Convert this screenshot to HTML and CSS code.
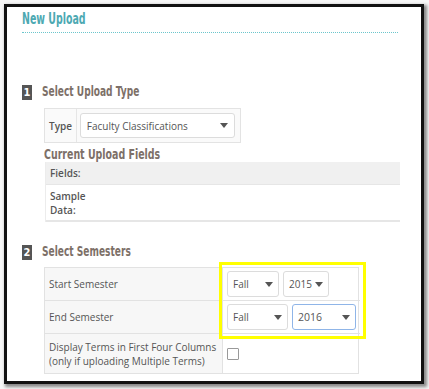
FILE: index.html
```html
<!DOCTYPE html>
<html>
<head>
<meta charset="utf-8">
<link rel="stylesheet" href="styles.css">
</head>
<body>
<div class="frame">
  <h1 class="title"><span class="narrow">New Upload</span></h1>
  <div class="rule"></div>

  <div class="step step-1">
    <span class="badge">1</span>
    <span class="step-title narrow">Select Upload Type</span>
  </div>

  <div class="type-box">
    <div class="type-label">Type</div>
    <div class="select select-type">
      <span>Faculty Classifications</span>
      <svg class="caret" width="8" height="5" viewBox="0 0 8 5"><path d="M0 0H8L4 5Z" fill="#555"/></svg>
    </div>
  </div>

  <h2 class="sub-title"><span class="narrow">Current Upload Fields</span></h2>
  <div class="fields-table">
    <div class="fields-row">Fields:</div>
    <div class="sample-row">Sample<br>Data:</div>
  </div>

  <div class="step step-2">
    <span class="badge">2</span>
    <span class="step-title narrow">Select Semesters</span>
  </div>

  <div class="sem-table">
    <div class="sem-label row-a">Start Semester</div>
    <div class="sem-ctrl row-a">
      <div class="select s-fall1"><span>Fall</span><svg class="caret" width="8" height="5" viewBox="0 0 8 5"><path d="M0 0H8L4 5Z" fill="#555"/></svg></div>
      <div class="select s-2015"><span>2015</span><svg class="caret" width="8" height="5" viewBox="0 0 8 5"><path d="M0 0H8L4 5Z" fill="#555"/></svg></div>
    </div>
    <div class="sem-label row-b">End Semester</div>
    <div class="sem-ctrl row-b">
      <div class="select s-fall2"><span>Fall</span><svg class="caret" width="8" height="5" viewBox="0 0 8 5"><path d="M0 0H8L4 5Z" fill="#555"/></svg></div>
      <div class="select s-2016 focused"><span>2016</span><svg class="caret" width="8" height="5" viewBox="0 0 8 5"><path d="M0 0H8L4 5Z" fill="#555"/></svg></div>
    </div>
    <div class="sem-label row-c">Display Terms in First Four Columns<br>(only if uploading Multiple Terms)</div>
    <div class="sem-ctrl row-c"><span class="checkbox"></span></div>
  </div>

  <div class="highlight"></div>
</div>
</body>
</html>
```

FILE: styles.css
```css
* { box-sizing: border-box; }
html, body { margin: 0; padding: 0; }
body {
  background: #f6f6f6;
  width: 429px;
  height: 389px;
  overflow: hidden;
  font-family: "Open Sans", "Liberation Sans", sans-serif;
  color: #555;
}
.frame {
  position: relative;
  margin: 4px 0 0 4px;
  width: 420px;
  height: 380px;
  background: #fff;
  border: 3px solid #111;
  box-shadow: 2px 2px 3px 1px rgba(0,0,0,0.45);
  padding: 0 0 0 15px;
}
.narrow {
  display: inline-block;
  white-space: nowrap;
  transform: scaleX(0.72);
  transform-origin: left center;
}
.title {
  margin: 0;
  padding-top: 3px;
  height: 21px;
  line-height: 18px;
  font-family: "DejaVu Sans Condensed", "Liberation Sans", sans-serif;
  font-weight: bold;
  font-size: 15px;
  color: #4da9b2;
}
.title .narrow { transform: scaleX(0.7); }
.rule {
  margin-top: 4px;
  width: 376px;
  border-top: 1px dotted #6cc6cc;
}
.step {
  display: flex;
  align-items: center;
  height: 18px;
}
.step-1 { margin-top: 49px; }
.step-2 { margin-top: 20px; }
.badge {
  display: inline-flex;
  align-items: center;
  justify-content: center;
  width: 10px;
  height: 15px;
  background: #555;
  color: #fff;
  font-family: "DejaVu Sans Condensed", "Liberation Sans", sans-serif;
  font-weight: bold;
  font-size: 11px;
  margin-top: 3px;
}
.step-title {
  margin-left: 10px;
  font-family: "DejaVu Sans Condensed", "Liberation Sans", sans-serif;
  font-weight: bold;
  font-size: 14px;
  color: #7d7068;
}
.type-box {
  margin: 8px 0 0 22px;
  width: 197px;
  height: 35px;
  border: 1px solid #e3e3e3;
  background: #fafafa;
  display: flex;
  align-items: center;
  padding: 0 5px 0 0;
}
.type-label {
  width: 32px;
  height: 100%;
  border-right: 1px solid #e6e6e6;
  display: flex;
  align-items: center;
  padding-left: 4px;
  font-size: 10px;
  font-weight: 600;
  color: #555;
}
.select {
  display: flex;
  align-items: center;
  justify-content: space-between;
  height: 25px;
  border: 1px solid #dcdcdc;
  border-radius: 3px;
  background: #fff;
  font-size: 10px;
  color: #555;
  padding: 0 6px 0 6px;
}
.select-type {
  margin-left: 3px;
  width: 156px;
}
.caret { display: block; }
.sub-title {
  margin: 3px 0 0 22px;
  height: 16px;
  line-height: 16px;
  font-family: "DejaVu Sans Condensed", "Liberation Sans", sans-serif;
  font-weight: bold;
  font-size: 14px;
  color: #7d7068;
}
.sub-title .narrow { transform: scaleX(0.75); }
.fields-table {
  margin: 0 0 0 23px;
  width: 355px;
  border-left: 1px solid #ececec;
}
.fields-row {
  height: 23px;
  background: #f0f0f0;
  border-bottom: 1px solid #e6e6e6;
  display: flex;
  align-items: center;
  padding-left: 4px;
  font-size: 10px;
  font-weight: 600;
}
.sample-row {
  height: 37px;
  border-bottom: 2px solid #e6e6e6;
  padding: 4px 0 0 4px;
  font-size: 10px;
  font-weight: 600;
  line-height: 14px;
}
.sem-table {
  margin: 7px 0 0 22px;
  width: 315px;
  display: grid;
  grid-template-columns: 178px 137px;
  grid-template-rows: 33px 33px 39px;
  border: 1px solid #e2e2e2;
}
.sem-label {
  background: #f7f7f7;
  border-right: 1px solid #e2e2e2;
  display: flex;
  align-items: center;
  padding-left: 4px;
  font-size: 10px;
  line-height: 14px;
  color: #555;
}
.sem-ctrl {
  display: flex;
  align-items: center;
  gap: 4px;
  padding-left: 4px;
}
.row-a, .row-b { border-bottom: 1px solid #e2e2e2; }
.sem-ctrl .select { height: 26px; padding: 0 5px 0 5px; }
.s-fall1 { width: 52px; }
.s-2015 { width: 46px; padding-right: 3px; }
.s-fall2 { width: 61px; }
.s-2016 { width: 64px; padding-left: 6px; padding-right: 6px; }
.s-2016 span { font-size: 10.5px; }
.focused { border-color: #8fb5e8; }
.checkbox {
  display: block;
  width: 12px;
  height: 12px;
  border: 1px solid #999;
  border-radius: 1px;
  background: #fff;
}
.highlight {
  position: absolute;
  left: 212px;
  top: 255px;
  width: 147px;
  height: 77px;
  border: 3px solid #ffff00;
}
```
